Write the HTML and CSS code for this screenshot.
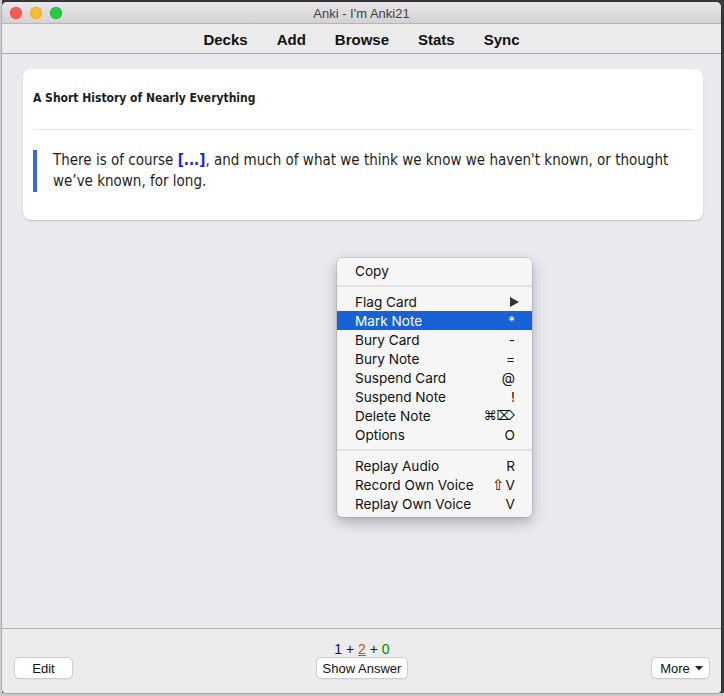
FILE: index.html
```html
<!DOCTYPE html>
<html lang="en">
<head>
<meta charset="utf-8">
<title>Anki - I'm Anki21</title>
<link rel="stylesheet" href="styles.css">
</head>
<body>
<div class="window">
  <header class="titlebar">
    <div class="lights">
      <span class="light red"></span>
      <span class="light yellow"></span>
      <span class="light green"></span>
    </div>
    <div class="title">Anki - I'm Anki21</div>
    <div></div>
  </header>
  <nav class="toolbar">
    <span>Decks</span>
    <span>Add</span>
    <span>Browse</span>
    <span>Stats</span>
    <span>Sync</span>
  </nav>
  <main class="main">
    <section class="card">
      <div class="card-title">A Short History of Nearly Everything</div>
      <hr class="card-sep">
      <blockquote class="quote">There is of course <span class="cloze">[...]</span>, and much of what we think we know we haven't known, or thought<br>we’ve known, for long.</blockquote>
    </section>
  </main>
  <footer class="bottombar">
    <div class="left"><button class="btn btn-edit">Edit</button></div>
    <div class="center">
      <div class="counts"><span class="c-new">1</span> + <span class="c-learn">2</span> + <span class="c-review">0</span></div>
      <button class="btn btn-answer">Show Answer</button>
    </div>
    <div class="right"><button class="btn btn-more">More <svg class="caret" width="8" height="5" viewBox="0 0 8 5"><path d="M0 0 H8 L4 4.5 Z" fill="#222"/></svg></button></div>
  </footer>

  <div class="menu">
    <div class="item"><span>Copy</span><span></span></div>
    <div class="sep"></div>
    <div class="item"><span>Flag Card</span><svg class="sub" width="9" height="10" viewBox="0 0 9 10"><path d="M0 0 L9 5 L0 10 Z" fill="#333"/></svg></div>
    <div class="item active"><span>Mark Note</span><span class="key">*</span></div>
    <div class="item"><span>Bury Card</span><span class="key">-</span></div>
    <div class="item"><span>Bury Note</span><span class="key">=</span></div>
    <div class="item"><span>Suspend Card</span><span class="key">@</span></div>
    <div class="item"><span>Suspend Note</span><span class="key">!</span></div>
    <div class="item"><span>Delete Note</span><span class="key"><span class="sym">⌘⌦</span></span></div>
    <div class="item"><span>Options</span><span class="key">O</span></div>
    <div class="sep"></div>
    <div class="item"><span>Replay Audio</span><span class="key">R</span></div>
    <div class="item"><span>Record Own Voice</span><span class="key"><span class="sym shift">⇧</span>V</span></div>
    <div class="item"><span>Replay Own Voice</span><span class="key">V</span></div>
  </div>
</div>
</body>
</html>
```

FILE: styles.css
```css
* { box-sizing: border-box; }

html, body {
  margin: 0;
  width: 724px;
  height: 696px;
  overflow: hidden;
}

body {
  background:
    linear-gradient(180deg, transparent 693px, #c9c9c9 693px),
    linear-gradient(90deg, #cfcfcf 0 2px, #3a3a3a 2px);
  font-family: "Liberation Sans", Arial, sans-serif;
  color: #1a1a1a;
}

.window {
  position: relative;
  margin: 2px 0 0 2px;
  width: 719px;
  height: 691px;
  background: #e9eaee;
  border-radius: 5px 5px 4px 4px;
  overflow: hidden;
  display: flex;
  flex-direction: column;
  box-shadow: 0 0 0 0.5px rgba(0, 0, 0, 0.35);
}

/* title bar */
.titlebar {
  flex: none;
  height: 22px;
  display: grid;
  grid-template-columns: 1fr auto 1fr;
  align-items: center;
  background: linear-gradient(#e9e7e9, #d3d1d3);
  border-bottom: 1px solid #b7b5b7;
}

.lights {
  display: flex;
  gap: 8px;
  padding-left: 8px;
  padding-top: 1px;
}

.light {
  width: 12px;
  height: 12px;
  border-radius: 50%;
}
.red { background: #fc5b57; box-shadow: inset 0 0 0 0.5px #de3f3b; }
.yellow { background: #fdbb2e; box-shadow: inset 0 0 0 0.5px #dd9d22; }
.green { background: #2ac941; box-shadow: inset 0 0 0 0.5px #1ea933; }

.title {
  font-size: 13px;
  color: #3f3f3f;
  padding-top: 1px;
}

/* toolbar */
.toolbar {
  flex: none;
  height: 30px;
  display: flex;
  justify-content: center;
  align-items: center;
  gap: 29px;
  padding-top: 2px;
  background: #ebebeb;
  border-bottom: 1px solid #aaaaaa;
  font-size: 15px;
  font-weight: bold;
  color: #111;
}

/* main area */
.main {
  flex: 1;
  padding: 15px 18px 0 21px;
}

.card {
  background: #fff;
  border-radius: 8px;
  box-shadow: 0 1px 1.5px rgba(0, 0, 0, 0.18);
  padding: 21px 9px 28px 10px;
  font-family: "DejaVu Sans Condensed", "DejaVu Sans", sans-serif;
  font-stretch: condensed;
}

.card-title {
  font-size: 12px;
  font-weight: bold;
  line-height: 16px;
  color: #1c1c1c;
}

.card-sep {
  margin: 23px 0 20px;
  border: 0;
  height: 1px;
  background: #e7e7e7;
}

.quote {
  margin: 0;
  border-left: 4px solid #3567e6;
  padding-left: 16px;
  font-size: 15px;
  line-height: 21px;
  color: #1e1e1e;
}

.cloze {
  color: #1a1aff;
  font-weight: bold;
}

/* bottom bar */
.bottombar {
  flex: none;
  height: 65px;
  display: grid;
  grid-template-columns: 1fr auto 1fr;
  align-items: end;
  padding: 0 11px 14px 12px;
  background: #ececec;
  border-top: 1px solid #b2b2b2;
}

.center {
  display: flex;
  flex-direction: column;
  align-items: center;
}

.right {
  display: flex;
  justify-content: flex-end;
}

.counts {
  font-size: 14px;
  line-height: 16px;
  color: #111;
}
.c-new { color: #00009a; }
.c-learn { color: #c44f0f; text-decoration: underline; }
.c-review { color: #008a00; }

.btn {
  height: 22px;
  margin: 0;
  padding: 0;
  border: 1px solid #cdcdcd;
  border-radius: 5px;
  background: #fff;
  font-family: "Liberation Sans", Arial, sans-serif;
  font-size: 13px;
  color: #111;
  box-shadow: 0 0.5px 0.5px rgba(0, 0, 0, 0.08);
}
.btn-edit { width: 59px; }
.btn-answer { width: 92px; }
.btn-more {
  width: 59px;
  display: flex;
  align-items: center;
  justify-content: center;
  gap: 5px;
  padding-left: 2px;
}
.caret { display: block; margin-top: 1px; }

/* context menu */
.menu {
  position: absolute;
  left: 335px;
  top: 256px;
  width: 195px;
  padding: 3px 0 4px;
  background: #f6f6f6;
  border-radius: 5px;
  box-shadow: 0 0 0 0.5px rgba(0, 0, 0, 0.18), 0 5px 14px rgba(0, 0, 0, 0.28);
  font-family: Inter, "Liberation Sans", sans-serif;
  font-size: 13.6px;
  color: #111;
}

.item {
  height: 19px;
  display: flex;
  align-items: center;
  justify-content: space-between;
  padding: 0 17px 0 18px;
}

.item.active {
  background: #1862d6;
  color: #fff;
}

.sub { margin-right: -4px; }

.key {
  display: flex;
  align-items: center;
}

.sym {
  font-family: "DejaVu Sans", sans-serif;
  font-size: 13px;
}

.shift {
  font-size: 15px;
  margin-right: 1px;
}

.sep {
  height: 2px;
  margin: 5px 0;
  background: #e2e2e2;
}
```
